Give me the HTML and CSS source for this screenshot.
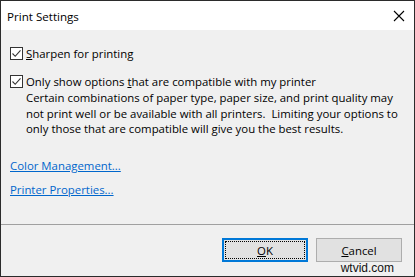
FILE: index.html
```html
<!DOCTYPE html>
<html>
<head>
<meta charset="utf-8">
<link rel="stylesheet" href="styles.css">
</head>
<body>
<div class="window">
  <div class="titlebar">
    <span class="title">Print Settings</span>
    <svg class="close" width="12" height="12" viewBox="0 0 12 12"><path d="M1 1 L11 11 M11 1 L1 11" stroke="#000" stroke-width="1.1" fill="none"/></svg>
  </div>
  <div class="client">
    <div class="content">
      <div class="option first">
        <span class="box"><svg width="11" height="11" viewBox="0 0 11 11"><path d="M1.5 5.5 L4.2 8.3 L9.5 2.3" stroke="#333" stroke-width="1.1" fill="none"/></svg></span>
        <div class="label"><span class="main"><u>S</u>harpen for printing</span></div>
      </div>
      <div class="option second">
        <span class="box"><svg width="11" height="11" viewBox="0 0 11 11"><path d="M1.5 5.5 L4.2 8.3 L9.5 2.3" stroke="#333" stroke-width="1.1" fill="none"/></svg></span>
        <div class="label">
          <span class="main">Only show options <u>t</u>hat are compatible with my printer</span>
          <p class="desc">Certain combinations of paper type, paper size, and print quality may not print well or be available with all printers.&nbsp; Limiting your options to only those that are compatible will give you the best results.</p>
        </div>
      </div>
      <div class="links">
        <a class="link" href="#">Color Management...</a>
        <a class="link" href="#">Printer Properties...</a>
      </div>
    </div>
    <div class="footer">
      <button class="btn default"><span class="focus"><u>O</u>K</span></button>
      <button class="btn"><span class="focus-none"><u>C</u>ancel</span></button>
    </div>
    <span class="watermark">wtvid.com</span>
  </div>
</div>
</body>
</html>
```
FILE: styles.css
```css
html, body {
  margin: 0;
  padding: 0;
  background: #f0f0f0;
}
.window {
  width: 415px;
  height: 277px;
  box-sizing: border-box;
  border: 1px solid #2b2b2b;
  display: flex;
  flex-direction: column;
  font-family: "Open Sans", "Noto Sans", sans-serif;
  font-size: 11.4px;
  color: #000;
  position: relative;
}
.titlebar {
  height: 29px;
  background: #fff;
  display: flex;
  align-items: center;
  justify-content: space-between;
  padding: 0 9px 0 6px;
  flex: none;
}
.title {
  font-size: 11.6px;
  margin-top: 1px;
}
.client {
  flex: 1;
  background: #f0f0f0;
  display: flex;
  flex-direction: column;
}
.content {
  flex: 1;
  padding: 16px 9px 0 9px;
}
.option {
  display: flex;
  align-items: flex-start;
  gap: 3px;
}
.second {
  margin-top: 12px;
}
.box {
  width: 11px;
  height: 11px;
  border: 1px solid #333;
  background: #fff;
  flex: none;
  display: flex;
  margin-top: 1px;
}
.main {
  line-height: 16px;
  display: block;
}
.desc {
  margin: 0;
  line-height: 15.7px;
}
.links {
  display: flex;
  flex-direction: column;
  gap: 8px;
  margin-top: 21px;
  align-items: flex-start;
}
.link {
  color: #0066cc;
  text-decoration: underline;
  line-height: 16px;
}
.footer {
  flex: none;
  height: 52px;
  border-top: 1px solid #a0a0a0;
  box-sizing: border-box;
  display: flex;
  justify-content: flex-end;
  align-items: flex-start;
  gap: 8px;
  padding: 13px 12px 0 0;
}
.btn {
  width: 86px;
  height: 24px;
  box-sizing: border-box;
  background: #e1e1e1;
  border: 1px solid #adadad;
  font-family: inherit;
  font-size: 11.4px;
  color: #000;
  padding: 0;
  display: flex;
  align-items: center;
  justify-content: center;
}
.btn.default {
  border: 2px solid #0078d7;
  padding: 1px;
}
.focus {
  display: flex;
  align-items: center;
  justify-content: center;
  width: 100%;
  height: 100%;
  box-sizing: border-box;
  border: 1px dotted #000;
}
.watermark {
  position: absolute;
  right: 19px;
  bottom: 1px;
  font-family: "Liberation Sans", Arial, sans-serif;
  font-size: 12px;
  color: #111;
  background: #f0f0f0;
  line-height: 13px;
  padding: 0 1px;
}
```
